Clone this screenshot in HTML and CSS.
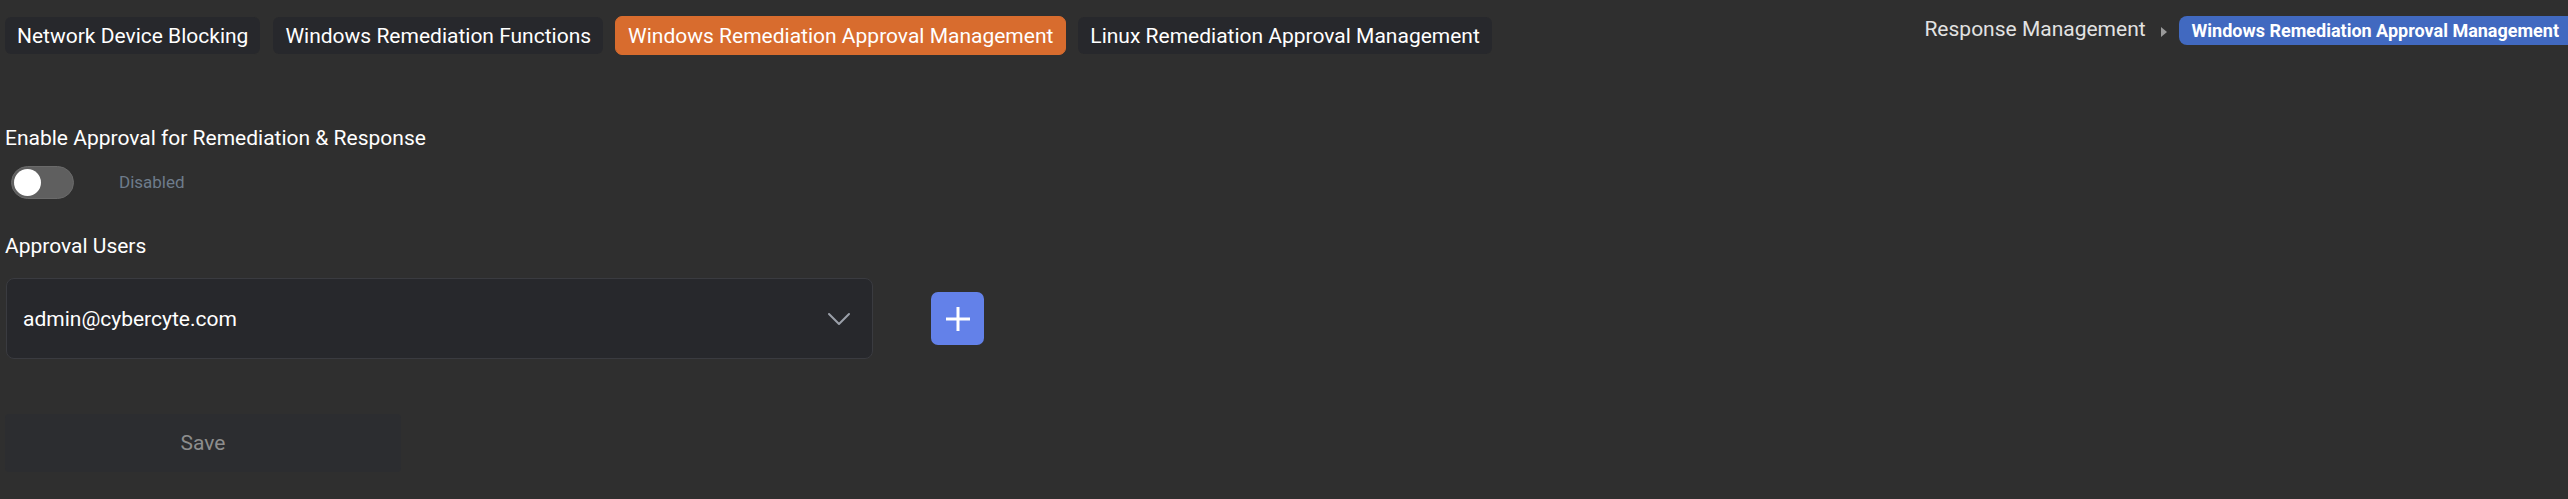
FILE: index.html
```html
<!DOCTYPE html>
<html lang="en">
<head>
<meta charset="utf-8">
<title>Windows Remediation Approval Management</title>
<link rel="stylesheet" href="styles.css">
</head>
<body>
<header class="topbar">
  <nav class="tabs">
    <div class="tab">Network Device Blocking</div>
    <div class="tab">Windows Remediation Functions</div>
    <div class="tab tab-active">Windows Remediation Approval Management</div>
    <div class="tab">Linux Remediation Approval Management</div>
  </nav>
  <div class="breadcrumb">
    <span class="crumb">Response Management</span>
    <span class="crumb-arrow"></span>
    <span class="crumb-current">Windows Remediation Approval Management</span>
  </div>
</header>
<main class="content">
  <div class="field-label title">Enable Approval for Remediation &amp; Response</div>
  <div class="toggle-row">
    <div class="toggle"><div class="knob"></div></div>
    <span class="toggle-text">Disabled</span>
  </div>
  <div class="field-label users-label">Approval Users</div>
  <div class="users-row">
    <div class="select">
      <span class="select-value">admin@cybercyte.com</span>
      <svg class="chevron" width="24" height="14" viewBox="0 0 24 14"><path d="M2 2 L12 12 L22 2" fill="none" stroke="#9ba0a9" stroke-width="2" stroke-linecap="round" stroke-linejoin="round"/></svg>
    </div>
    <button class="add-btn" type="button">
      <svg width="26" height="26" viewBox="0 0 26 26"><path d="M13 1 V25 M1 13 H25" stroke="#ffffff" stroke-width="3"/></svg>
    </button>
  </div>
  <button class="save-btn" type="button">Save</button>
</main>
</body>
</html>
```
FILE: styles.css
```css
html, body {
  margin: 0;
  padding: 0;
  background: #2f2f2f;
  font-family: Roboto, "Liberation Sans", sans-serif;
  color: #ffffff;
  overflow: hidden;
}

.topbar {
  display: flex;
  justify-content: space-between;
  align-items: flex-start;
  padding: 16px 0 0 4px;
}

.tabs {
  display: flex;
  gap: 11px;
}

.tab {
  height: 37px;
  padding: 0 12px;
  display: flex;
  align-items: center;
  background: #27282c;
  background-clip: padding-box;
  border: 1px solid #2f2f2f;
  border-radius: 7px;
  font-size: 21px;
  color: #ffffff;
  white-space: nowrap;
}

.tab-active {
  background: #d86c2e;
  border-color: #d86c2e;
}

.breadcrumb {
  display: flex;
  align-items: center;
  height: 29px;
}

.crumb {
  font-size: 21px;
  color: #e2e2e2;
  margin-bottom: 3px;
}

.crumb-arrow {
  width: 0;
  height: 0;
  border-top: 5px solid transparent;
  border-bottom: 5px solid transparent;
  border-left: 6px solid #9a9a9a;
  margin: 3px 12px 0 15px;
}

.crumb-current {
  height: 29px;
  display: flex;
  align-items: center;
  padding: 0 9px 0 13px;
  background: #4169c0;
  border-radius: 8px 0 0 8px;
  font-size: 18px;
  font-weight: 700;
  color: #ffffff;
  white-space: nowrap;
}

.content {
  padding: 0 0 0 5px;
  display: flex;
  flex-direction: column;
  align-items: flex-start;
}

.field-label {
  font-size: 21px;
  line-height: 24px;
  color: #ffffff;
}

.title {
  margin-top: 71px;
}

.toggle-row {
  display: flex;
  align-items: center;
  margin-top: 16px;
  margin-left: 6px;
}

.toggle {
  width: 63px;
  height: 33px;
  box-sizing: border-box;
  border-radius: 17px;
  background: #5f5f5f;
  border: 1px solid #6a6a6a;
  display: flex;
  align-items: center;
  padding-left: 2px;
}

.knob {
  width: 27px;
  height: 27px;
  border-radius: 50%;
  background: #ffffff;
}

.toggle-text {
  margin-left: 45px;
  margin-bottom: 2px;
  font-size: 17px;
  line-height: 20px;
  color: #6e7c8b;
}

.users-label {
  margin-top: 35px;
}

.users-row {
  display: flex;
  align-items: center;
  gap: 58px;
  margin-top: 20px;
  margin-left: 1px;
}

.select {
  width: 867px;
  height: 81px;
  box-sizing: border-box;
  border: 1px solid #3a3b40;
  border-radius: 8px;
  background: #27282c;
  display: flex;
  align-items: center;
  justify-content: space-between;
  padding: 0 21px 0 16px;
}

.select-value {
  font-size: 21px;
  color: #ffffff;
}

.chevron {
  display: block;
}

.add-btn {
  width: 53px;
  height: 53px;
  border: none;
  border-radius: 7px;
  background: #6381e9;
  display: flex;
  align-items: center;
  justify-content: center;
  padding: 0;
}

.add-btn svg {
  display: block;
}

.save-btn {
  margin-top: 55px;
  width: 396px;
  height: 58px;
  border: none;
  border-radius: 4px;
  background: #2c2d30;
  color: #8d8d8d;
  font-family: Roboto, "Liberation Sans", sans-serif;
  font-size: 21px;
  padding: 0;
}
```
